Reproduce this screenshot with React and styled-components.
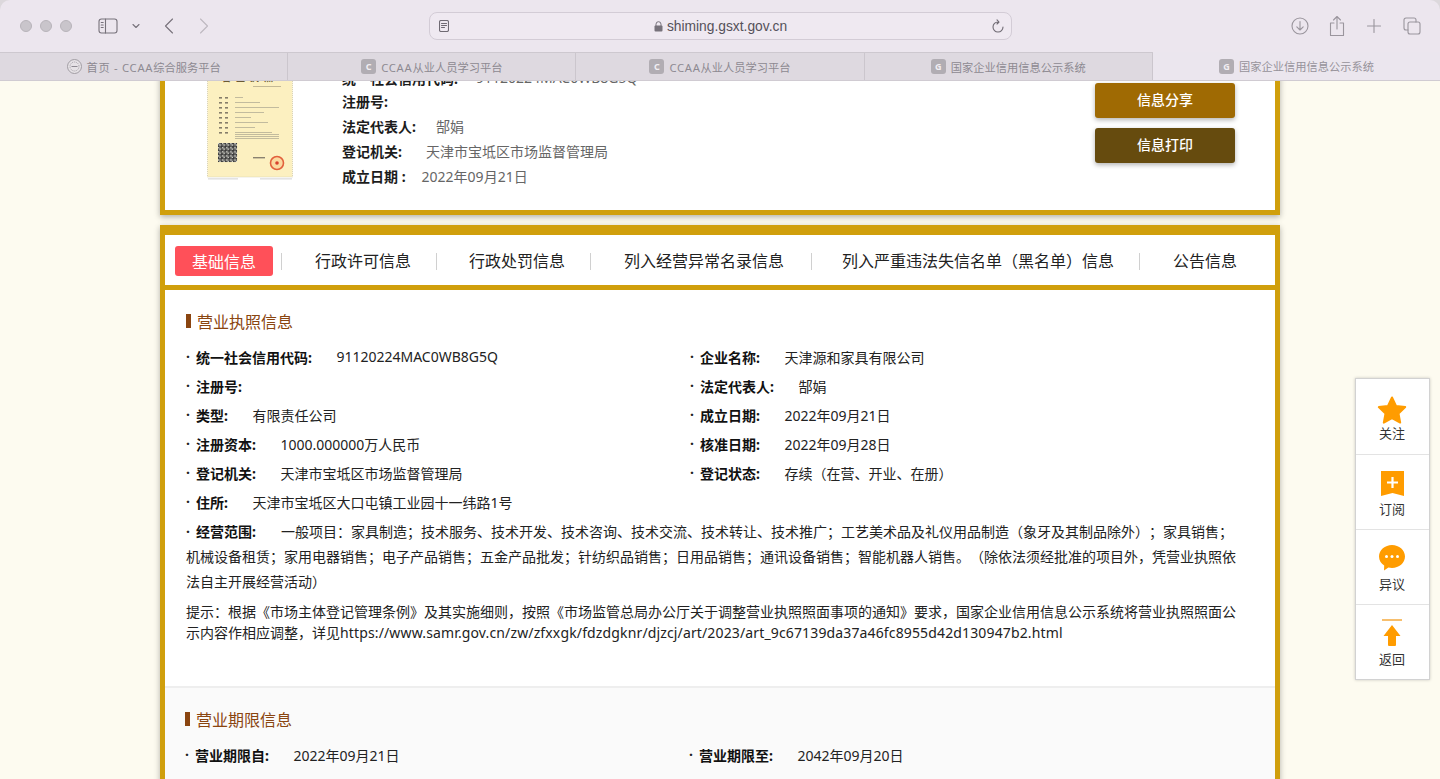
import styled, { createGlobalStyle } from 'styled-components';

const GlobalStyle = createGlobalStyle`
  html, body {
    margin: 0;
    padding: 0;
    overflow: hidden;
    background: #fdfbf0;
    font-family: "Noto Sans", "Noto Sans CJK SC", sans-serif;
    text-spacing-trim: space-all;
  }
`;

const Window = styled.div`
  width: 1440px;
  height: 779px;
  display: flex;
  flex-direction: column;
  overflow: hidden;
  background: #dcd8dc;
`;

const Toolbar = styled.div`
  height: 52px;
  flex: none;
  display: flex;
  align-items: center;
  background: #ece6ee;
  border-radius: 10px 10px 0 0;
  padding-left: 20px;
  box-sizing: border-box;
  color: #77727b;
`;

const Lights = styled.div`
  display: flex;
  gap: 8px;
  margin-right: 26px;
`;

const Light = styled.span`
  width: 12px;
  height: 12px;
  border-radius: 50%;
  background: #c9c5cb;
  border: 1px solid #b8b4ba;
  box-sizing: border-box;
`;

const ToolIcon = styled.svg`
  flex: none;
  fill: none;
  stroke: ${(p) => p.$color || '#77727b'};
  stroke-width: 1.1;
  stroke-linecap: round;
  stroke-linejoin: round;
  margin-left: ${(p) => p.$left || 0}px;
`;

const UrlBar = styled.div`
  width: 583px;
  height: 28px;
  margin-left: 220px;
  flex: none;
  box-sizing: border-box;
  display: flex;
  align-items: center;
  justify-content: space-between;
  padding: 0 7px 0 9px;
  background: #efe9f1;
  border: 1px solid #d3ccd6;
  border-radius: 8px;
`;

const UrlText = styled.div`
  display: flex;
  align-items: center;
  gap: 4px;
  font-family: "Liberation Sans", sans-serif;
  font-size: 13.8px;
  color: #55515a;
`;

const TabStrip = styled.div`
  height: 29px;
  flex: none;
  display: flex;
  box-sizing: border-box;
  border-top: 1px solid #cdc8cf;
  border-bottom: 1px solid #d0cbd2;
  background: #ded9e0;
`;

const BrowserTab = styled.div`
  flex: 1;
  display: flex;
  align-items: center;
  justify-content: center;
  gap: 5px;
  font-size: 11.25px;
  color: ${(p) => (p.$active ? '#96929a' : '#8d8991')};
  background: ${(p) => (p.$active ? '#ebe6ee' : 'transparent')};
  border-right: ${(p) => (p.$active ? 'none' : '1px solid #cbc6cd')};
  margin-top: ${(p) => (p.$active ? '-1px' : '0')};
`;

const TabWide = styled.span`
  letter-spacing: 0.7px;
`;

const Favicon = styled.span`
  width: 15px;
  height: 15px;
  border-radius: 3px;
  background: #b1adb3;
  color: #f1eef2;
  font-size: 9px;
  font-weight: 700;
  display: flex;
  align-items: center;
  justify-content: center;
`;

const Page = styled.div`
  flex: 1;
  min-height: 0;
  position: relative;
  overflow: hidden;
  background: #fdfbf0;
`;

const Content = styled.div`
  width: 1120px;
  margin: -41px auto 0;
`;

const SummaryCard = styled.div`
  height: 175px;
  box-sizing: border-box;
  display: flex;
  align-items: flex-start;
  background: #fff;
  border: 5px solid #d09f0c;
  border-top-width: 10px;
  padding: 10px 40px 0 42px;
  box-shadow: 0 2px 6px rgba(0, 0, 0, 0.3);
`;

const Licence = styled.svg`
  flex: none;
  width: 86px;
  height: 120px;
`;

const SummaryInfo = styled.div`
  margin: 7px 0 0 49px;
`;

const SummaryRow = styled.div`
  height: ${(p) => p.$height || 25}px;
  display: flex;
  align-items: center;
  font-size: 14px;
`;

const SummaryLabel = styled.span`
  font-weight: 700;
  color: #1c1c1c;
  margin-right: ${(p) => p.$gap || 20}px;
`;

const SummaryValue = styled.span`
  color: #666;
`;

const Actions = styled.div`
  margin: 23px 0 0 auto;
  display: flex;
  flex-direction: column;
  gap: 10px;
`;

const ActionButton = styled.div`
  width: 140px;
  height: 35px;
  display: flex;
  align-items: center;
  justify-content: center;
  border-radius: 3px;
  background: ${(p) => p.$bg};
  color: #fff;
  font-size: 14px;
  font-weight: 500;
  padding-bottom: 3px;
  box-sizing: border-box;
  box-shadow: 0 2px 5px rgba(0, 0, 0, 0.3);
`;

const DetailCard = styled.div`
  margin-top: 10px;
  border: 5px solid #d09f0c;
  border-top-width: 10px;
  border-bottom: none;
  background: #fff;
  box-shadow: 0 2px 6px rgba(0, 0, 0, 0.3);
`;

const TabBar = styled.div`
  height: 55px;
  box-sizing: border-box;
  display: flex;
  align-items: center;
  padding: 2px 0 0 10px;
  border-bottom: 5px solid #d09f0c;
`;

const ActiveTab = styled.div`
  width: 98px;
  height: 30px;
  margin-right: 8px;
  display: flex;
  align-items: center;
  justify-content: center;
  border-radius: 3px;
  background: #ff5059;
  color: #fff;
  font-size: 16px;
`;

const Tab = styled.div`
  width: ${(p) => p.$width}px;
  box-sizing: border-box;
  padding-left: ${(p) => p.$left}px;
  border-left: 1px solid #d0d0d0;
  font-size: 16px;
  line-height: 17px;
  color: #222;
  white-space: nowrap;
`;

const Section = styled.div`
  box-sizing: border-box;
  height: ${(p) => p.$height}px;
  padding: 21px 39px 0 ${(p) => p.$inset}px;
  background: ${(p) => (p.$muted ? '#fafafa' : '#fff')};
  border-top: ${(p) => (p.$muted ? '2px solid #eeeeee' : 'none')};
`;

const SectionTitle = styled.div`
  height: 20px;
  display: flex;
  align-items: center;
  gap: 6px;
  font-size: 16px;
  color: #8a4510;
  margin-bottom: 11px;
  &::before {
    content: '';
    width: 5px;
    height: 14px;
    background: #8a4510;
  }
`;

const FieldGrid = styled.div`
  display: grid;
  grid-template-columns: 504px 1fr;
`;

const Field = styled.div`
  height: 29px;
  display: flex;
  align-items: center;
  font-size: 14px;
  color: #222;
  white-space: nowrap;
`;

const Dot = styled.span`
  width: 10px;
  font-weight: 700;
  flex: none;
`;

const ScopeDot = styled(Dot)`
  display: inline-block;
`;

const FieldLabel = styled.span`
  font-weight: 700;
  color: #111;
  margin-right: 24.5px;
`;

const Scope = styled.div`
  margin-top: 3px;
  font-size: 14px;
  line-height: 25px;
  color: #222;
`;

const InlineLabel = styled.span`
  font-weight: 700;
  color: #111;
  margin-right: 25px;
`;

const Hint = styled.div`
  margin-top: 7px;
  font-size: 14px;
  line-height: 21px;
  color: #222;
  word-break: break-all;
`;

const HintLink = styled.span`
  letter-spacing: 0.14px;
`;

const SidePanel = styled.div`
  position: absolute;
  left: 1355px;
  top: 297px;
  width: 75px;
  background: #fff;
  border: 1px solid #d2d2d2;
  box-shadow: 0 0 3px rgba(0, 0, 0, 0.2);
  box-sizing: border-box;
`;

const SideItem = styled.div`
  height: 75px;
  box-sizing: border-box;
  display: flex;
  flex-direction: column;
  align-items: center;
  padding-top: ${(p) => p.$top}px;
  padding-right: 1px;
  font-size: 13px;
  line-height: 16px;
  color: #333;
  border-top: ${(p) => (p.$first ? 'none' : '1px solid #e3e3e3')};
`;

const SideIcon = styled.svg`
  display: block;
  margin-bottom: ${(p) => p.$bottom}px;
`;

const tabs = [
  { label: '行政许可信息', width: 155, left: 33 },
  { label: '行政处罚信息', width: 154, left: 32 },
  { label: '列入经营异常名录信息', width: 221, left: 33 },
  { label: '列入严重违法失信名单（黑名单）信息', width: 328, left: 30 },
  { label: '公告信息', width: 120, left: 33 },
];

const fields = [
  ['统一社会信用代码:', '91120224MAC0WB8G5Q'],
  ['企业名称:', '天津源和家具有限公司'],
  ['注册号:', ''],
  ['法定代表人:', '郜娟'],
  ['类型:', '有限责任公司'],
  ['成立日期:', '2022年09月21日'],
  ['注册资本:', '1000.000000万人民币'],
  ['核准日期:', '2022年09月28日'],
  ['登记机关:', '天津市宝坻区市场监督管理局'],
  ['登记状态:', '存续（在营、开业、在册）'],
  ['住所:', '天津市宝坻区大口屯镇工业园十一纬路1号'],
];

function LicenceImage() {
  const rows = [37, 42, 47, 52, 57, 62, 67, 72];
  const qr = [];
  for (let y = 0; y < 14; y++) {
    for (let x = 0; x < 14; x++) {
      if ((x * 7 + y * 13 + x * y) % 3 !== 0) qr.push([x, y]);
    }
  }
  return (
    <Licence viewBox="0 0 86 120">
      <rect x="0.5" y="0" width="85" height="117" fill="#fcf0c0" stroke="#cfc9ae" strokeWidth="0.8" strokeDasharray="1 1" />
      <text x="43" y="21" fontSize="9" fontWeight="700" textAnchor="middle" fill="#6b5a33" letterSpacing="5">营业执照</text>
      <rect x="46" y="26" width="28" height="1" fill="#c4b995" />
      {rows.map((y, i) => (
        <g key={y}>
          <rect x="12" y={y} width="3" height="1.6" fill="#857d6a" />
          <rect x="18" y={y} width="3" height="1.6" fill="#857d6a" />
          <rect x="28" y={y} width={i === 2 ? 44 : 8 + ((i * 17) % 30)} height="1" fill="#c2bb9e" />
        </g>
      ))}
      {[74, 76, 78].map((y) => (
        <rect key={y} x="28" y={y} width="44" height="1" fill="#c2bb9e" />
      ))}
      <rect x="11" y="83" width="19" height="19" fill="#d8d8d0" />
      {qr.map(([x, y]) => (
        <rect key={`${x}-${y}`} x={11 + x * 1.36} y={83 + y * 1.36} width="1.36" height="1.36" fill="#3a3a3a" />
      ))}
      <rect x="46" y="97" width="12" height="1.4" fill="#8a8270" />
      <circle cx="70" cy="103" r="6.5" fill="#fbd9a0" stroke="#e2603c" strokeWidth="1.6" />
      <circle cx="70" cy="103" r="1.8" fill="#d8402c" />
      <rect x="1" y="118.500" width="30" height="0.8" fill="#c8c8c8" />
      <rect x="53" y="118.500" width="32" height="0.8" fill="#c8c8c8" />
    </Licence>
  );
}

function App() {
  return (
    <Window>
      <GlobalStyle />
      <Toolbar>
        <Lights>
          <Light />
          <Light />
          <Light />
        </Lights>
        <ToolIcon width="20" height="16" viewBox="0 0 20 16">
          <rect x="1" y="1" width="18" height="14" rx="2.5" />
          <path d="M7.5 1v14M3.2 4.5h2M3.2 7h2M3.2 9.5h2" />
        </ToolIcon>
        <ToolIcon width="8" height="6" viewBox="0 0 8 6" $left={14}>
          <path d="M1 1.500l3 3 3-3" />
        </ToolIcon>
        <ToolIcon width="10" height="16" viewBox="0 0 10 16" $left={24}>
          <path d="M8.500 1L1.500 8l7 7" />
        </ToolIcon>
        <ToolIcon width="10" height="16" viewBox="0 0 10 16" $left={25} $color="#bdb8c0">
          <path d="M1.500 1l7 7-7 7" />
        </ToolIcon>
        <UrlBar>
          <ToolIcon width="10" height="12" viewBox="0 0 10 12" $color="#6f6a73">
            <rect x="0.5" y="0.5" width="9" height="11" rx="1.5" />
            <path d="M2.500 3.500h5M2.500 5.500h5M2.500 7.500h3" />
          </ToolIcon>
          <UrlText>
            <svg width="9" height="11" viewBox="0 0 9 11">
              <path d="M2 5V3.200a2.500 2.500 0 015 0V5" fill="none" stroke="#77727b" />
              <rect x="0.5" y="4.5" width="8" height="6" rx="1" fill="#77727b" />
            </svg>
            shiming.gsxt.gov.cn
          </UrlText>
          <ToolIcon width="12" height="14" viewBox="0 0 12 14" $color="#6f6a73">
            <path d="M6 3a5 5 0 105 5M5 .8L7 3 5 5" />
          </ToolIcon>
        </UrlBar>
        <ToolIcon width="18" height="18" viewBox="0 0 18 18" $left={279} $color="#9a959d">
          <circle cx="9" cy="9" r="8" />
          <path d="M9 4.500v8.500M5.800 9.800L9 13l3.200-3.200" />
        </ToolIcon>
        <ToolIcon width="16" height="22" viewBox="0 0 16 22" $left={20} $color="#9a959d">
          <path d="M5 8H1.500v12.500h13V8H11M8 14V1.500M4.500 5L8 1.500 11.500 5" />
        </ToolIcon>
        <ToolIcon width="14" height="14" viewBox="0 0 14 14" $left={22} $color="#9a959d">
          <path d="M7 0.5v13M0.5 7h13" />
        </ToolIcon>
        <ToolIcon width="18" height="18" viewBox="0 0 18 18" $left={22} $color="#9a959d">
          <rect x="5" y="5" width="12" height="12" rx="2" />
          <path d="M5 13H3a2 2 0 01-2-2V3a2 2 0 012-2h8a2 2 0 012 2v2" />
        </ToolIcon>
      </Toolbar>
      <TabStrip>
        <BrowserTab>
          <svg width="15" height="15" viewBox="0 0 15 15">
            <circle cx="7.5" cy="7.5" r="7" fill="#e6e2e6" stroke="#a19da3" />
            <circle cx="7.5" cy="7.5" r="4.5" fill="none" stroke="#a19da3" strokeDasharray="1 1" />
            <path d="M4.500 7.500h6" stroke="#8d8991" />
          </svg>
          <span>
            <TabWide>首页 - CCAA</TabWide>综合服务平台
          </span>
        </BrowserTab>
        <BrowserTab>
          <Favicon>C</Favicon>
          <span>
            <TabWide>CCAA</TabWide>从业人员学习平台
          </span>
        </BrowserTab>
        <BrowserTab>
          <Favicon>C</Favicon>
          <span>
            <TabWide>CCAA</TabWide>从业人员学习平台
          </span>
        </BrowserTab>
        <BrowserTab>
          <Favicon>G</Favicon>
          国家企业信用信息公示系统
        </BrowserTab>
        <BrowserTab $active>
          <Favicon>G</Favicon>
          国家企业信用信息公示系统
        </BrowserTab>
      </TabStrip>
      <Page>
        <Content>
          <SummaryCard>
            <LicenceImage />
            <SummaryInfo>
              <SummaryRow $height={21}>
                <SummaryLabel $gap={18}>统一社会信用代码:</SummaryLabel>
                <SummaryValue>91120224MAC0WB8G5Q</SummaryValue>
              </SummaryRow>
              <SummaryRow>
                <SummaryLabel>注册号:</SummaryLabel>
              </SummaryRow>
              <SummaryRow>
                <SummaryLabel $gap={20}>法定代表人:</SummaryLabel>
                <SummaryValue>郜娟</SummaryValue>
              </SummaryRow>
              <SummaryRow>
                <SummaryLabel $gap={24}>登记机关:</SummaryLabel>
                <SummaryValue>天津市宝坻区市场监督管理局</SummaryValue>
              </SummaryRow>
              <SummaryRow>
                <SummaryLabel $gap={16}>成立日期 :</SummaryLabel>
                <SummaryValue>2022年09月21日</SummaryValue>
              </SummaryRow>
            </SummaryInfo>
            <Actions>
              <ActionButton $bg="#9f6a03">信息分享</ActionButton>
              <ActionButton $bg="#664b0e">信息打印</ActionButton>
            </Actions>
          </SummaryCard>
          <DetailCard>
            <TabBar>
              <ActiveTab>基础信息</ActiveTab>
              {tabs.map((t) => (
                <Tab key={t.label} $width={t.width} $left={t.left}>
                  {t.label}
                </Tab>
              ))}
            </TabBar>
            <Section $height={396} $inset={21}>
              <SectionTitle>营业执照信息</SectionTitle>
              <FieldGrid>
                {fields.map(([label, value]) => (
                  <Field key={label}>
                    <Dot>·</Dot>
                    <FieldLabel>{label}</FieldLabel>
                    {value}
                  </Field>
                ))}
              </FieldGrid>
              <Scope>
                <ScopeDot>·</ScopeDot>
                <InlineLabel>经营范围:</InlineLabel>
                一般项目：家具制造；技术服务、技术开发、技术咨询、技术交流、技术转让、技术推广；工艺美术品及礼仪用品制造（象牙及其制品除外）；家具销售；机械设备租赁；家用电器销售；电子产品销售；五金产品批发；针纺织品销售；日用品销售；通讯设备销售；智能机器人销售。（除依法须经批准的项目外，凭营业执照依法自主开展经营活动）
              </Scope>
              <Hint>
                提示：根据《市场主体登记管理条例》及其实施细则，按照《市场监管总局办公厅关于调整营业执照照面事项的通知》要求，国家企业信用信息公示系统将营业执照照面公示内容作相应调整，详见
                <HintLink>https://www.samr.gov.cn/zw/zfxxgk/fdzdgknr/djzcj/art/2023/art_9c67139da37a46fc8955d42d130947b2.html</HintLink>
              </Hint>
            </Section>
            <Section $height={200} $inset={20} $muted>
              <SectionTitle>营业期限信息</SectionTitle>
              <FieldGrid>
                <Field>
                  <Dot>·</Dot>
                  <FieldLabel>营业期限自:</FieldLabel>
                  2022年09月21日
                </Field>
                <Field>
                  <Dot>·</Dot>
                  <FieldLabel>营业期限至:</FieldLabel>
                  2042年09月20日
                </Field>
              </FieldGrid>
            </Section>
          </DetailCard>
        </Content>
        <SidePanel>
          <SideItem $first $top={17}>
            <SideIcon width="30" height="28" viewBox="0 0 30 28" $bottom={1}>
              <path d="M15 1.500l4 8.400 9.200 1.200-6.700 6.400 1.700 9.100L15 22.200l-8.200 4.400 1.700-9.100-6.700-6.400 9.200-1.200z" fill="#ff9c00" stroke="#ff9c00" strokeWidth="2" strokeLinejoin="round" />
            </SideIcon>
            关注
          </SideItem>
          <SideItem $top={16}>
            <SideIcon width="23" height="26" viewBox="0 0 23 26" $bottom={4}>
              <path d="M0 0h23v25l-11.500-3L0 25z" fill="#ff9c00" />
              <path d="M11.500 6v11M6 11.500h11" stroke="#fff" strokeWidth="2.2" />
            </SideIcon>
            订阅
          </SideItem>
          <SideItem $top={15}>
            <SideIcon width="26" height="26" viewBox="0 0 26 26" $bottom={5}>
              <path d="M13 0c7 0 13 5 13 11.500S20 23 13 23c-1.300 0-2.500-.2-3.600-.5L5 25.500l.2-5C2 18.500 0 15.300 0 11.500 0 5 6 0 13 0z" fill="#ff9c00" />
              <circle cx="7.500" cy="11.500" r="1.500" fill="#fff" />
              <circle cx="13" cy="11.500" r="1.500" fill="#fff" />
              <circle cx="18.500" cy="11.500" r="1.500" fill="#fff" />
            </SideIcon>
            异议
          </SideItem>
          <SideItem $top={14}>
            <SideIcon width="20" height="28" viewBox="0 0 20 28" $bottom={4}>
              <path d="M0 1h20" stroke="#f5b04a" strokeWidth="1.600" />
              <path d="M10 6l8.500 11H14v9a1 1 0 01-1 1H7a1 1 0 01-1-1v-9H1.500z" fill="#ff9c00" />
            </SideIcon>
            返回
          </SideItem>
        </SidePanel>
      </Page>
    </Window>
  );
}

export default App;
